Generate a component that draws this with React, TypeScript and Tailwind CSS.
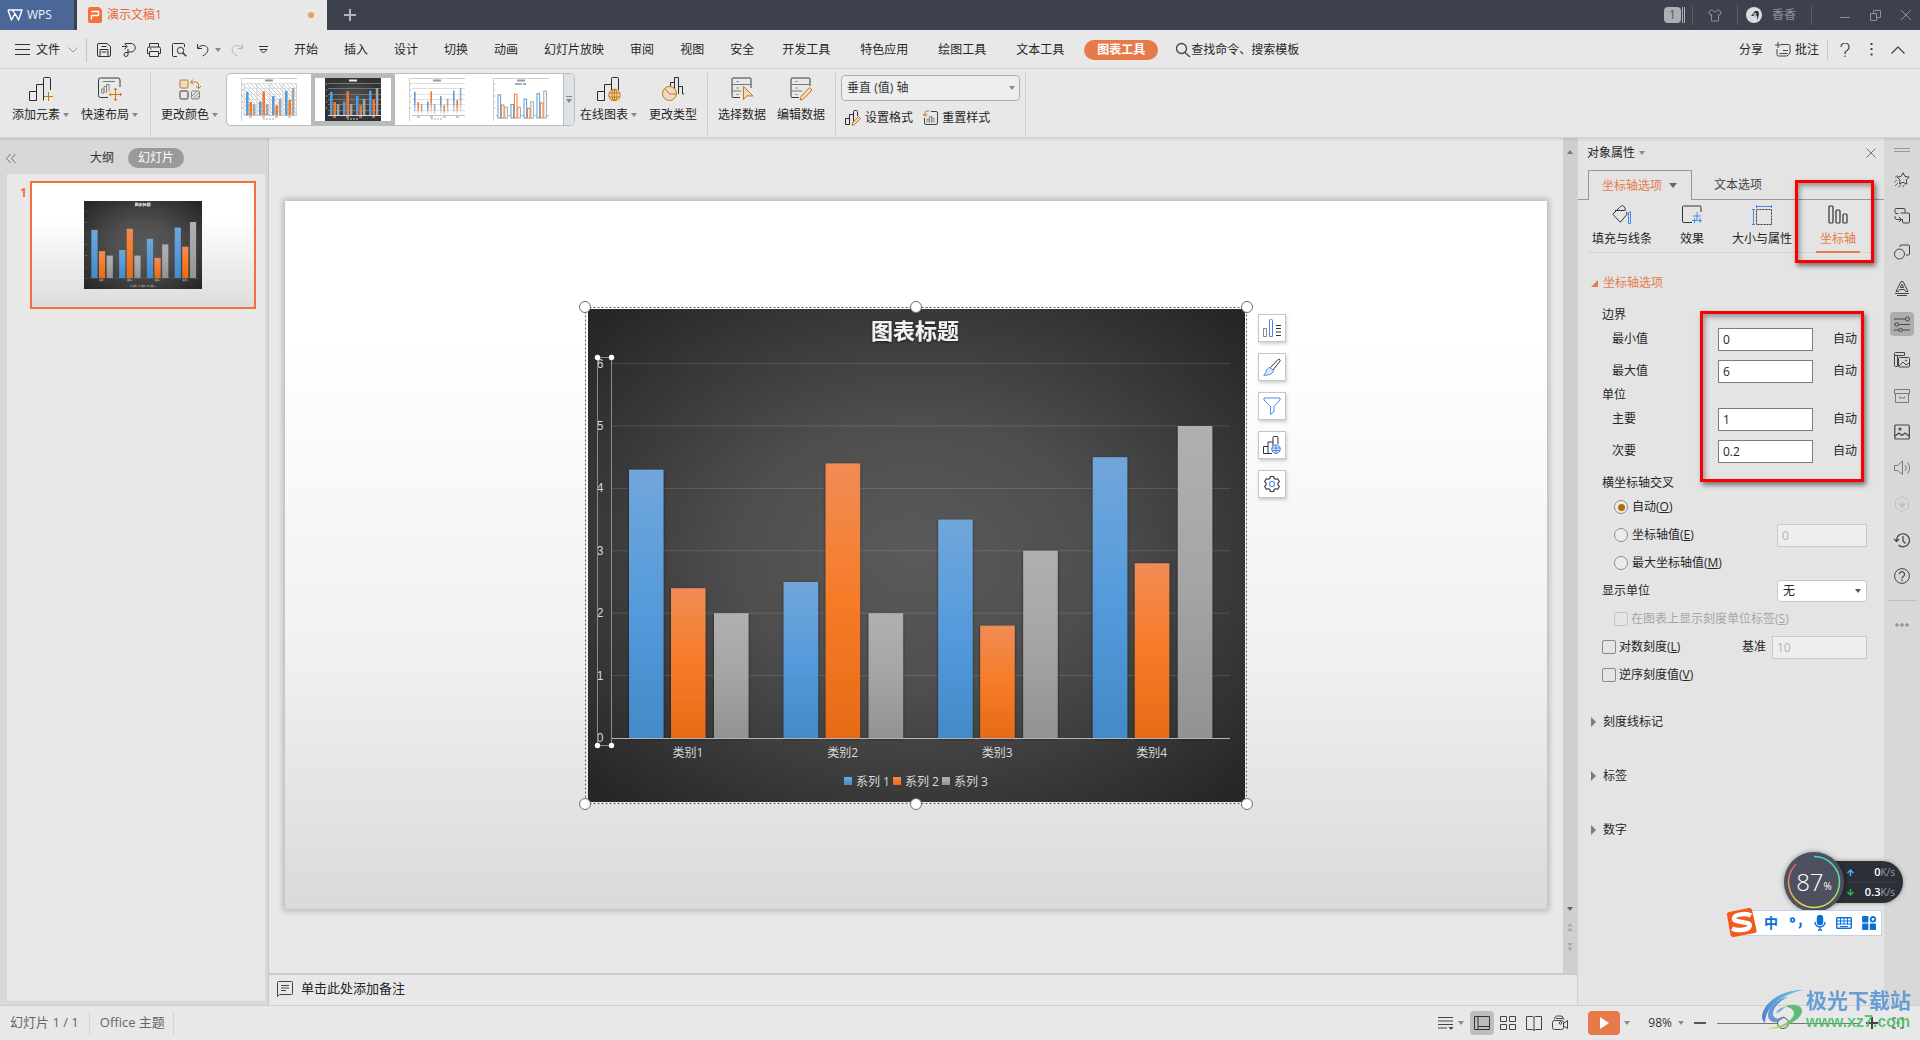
import React, { useState } from 'react';

type Children = { children?: React.ReactNode };

const INK = '#333333';
const AMBER = '#c8780a';
const BLUE = '#4a86e8';

interface IconProps extends Children {
  w?: number;
  h?: number;
  className?: string;
  stroke?: string;
  sw?: number;
}

const Icon: React.FC<IconProps> = ({ w = 16, h, className = '', stroke = INK, sw = 1, children }) => (
  <svg
    width={w}
    height={h ?? w}
    viewBox={`0 0 ${w} ${h ?? w}`}
    fill="none"
    stroke={stroke}
    strokeWidth={sw}
    strokeLinejoin="round"
    aria-hidden="true"
    className={`block shrink-0 ${className}`}
  >
    {children}
  </svg>
);

const Caret = ({ className = 'text-[#8a8a8a]' }: { className?: string }) => (
  <svg width="6" height="4" viewBox="0 0 6 4" fill="currentColor" aria-hidden="true" className={`block shrink-0 ${className}`}>
    <path d="M0 0h6L3 4z" />
  </svg>
);

/* ---------- chart ---------- */

const categories = [
  { name: '类别1', values: [4.3, 2.4, 2] },
  { name: '类别2', values: [2.5, 4.4, 2] },
  { name: '类别3', values: [3.5, 1.8, 3] },
  { name: '类别4', values: [4.5, 2.8, 5] },
];

const seriesStops = [
  ['#71a6db', '#559bdb', '#438ac9'],
  ['#f18c55', '#f67b28', '#e56b17'],
  ['#b0b0b0', '#a5a5a5', '#929292'],
];

const BASE_Y = 429;
const UNIT = 62.4;
const barOffsets = [41, 83, 126];

const Chart = ({ id, className = '' }: { id: string; className?: string }) => (
  <svg viewBox="0 0 657 493" className={`block ${className}`} role="img" aria-label="图表标题">
    <defs>
      <radialGradient id={`${id}-bg`} cx="0.5" cy="0.5" r="0.68">
        <stop offset="0" stopColor="#5a5a5a" />
        <stop offset="0.4" stopColor="#4e4e4e" />
        <stop offset="1" stopColor="#262626" />
      </radialGradient>
      {seriesStops.map((stops, i) => (
        <linearGradient key={i} id={`${id}-s${i}`} x1="0" y1="0" x2="0" y2="1">
          <stop offset="0" stopColor={stops[0]} />
          <stop offset="0.5" stopColor={stops[1]} />
          <stop offset="1" stopColor={stops[2]} />
        </linearGradient>
      ))}
      <filter id={`${id}-sh`} x="-20%" y="-5%" width="140%" height="110%">
        <feDropShadow dx="0" dy="1" stdDeviation="1.5" floodColor="#000" floodOpacity="0.55" />
      </filter>
    </defs>
    <rect width="657" height="493" fill={`url(#${id}-bg)`} />
    <text x="327" y="30" textAnchor="middle" fontSize="22" fontWeight="700" fill="#f2f2f2" filter={`url(#${id}-sh)`}>
      图表标题
    </text>
    {[1, 2, 3, 4, 5, 6].map((n) => (
      <line key={n} x1="24" x2="642" y1={BASE_Y - n * UNIT} y2={BASE_Y - n * UNIT} stroke="#fff" strokeOpacity="0.14" />
    ))}
    {[0, 1, 2, 3, 4, 5, 6].map((n) => (
      <text key={n} x="12" y={BASE_Y - n * UNIT + 4} textAnchor="middle" fontSize="12" fill="#d9d9d9" className="font-['Liberation_Sans',sans-serif]">
        {n}
      </text>
    ))}
    {categories.map((c, g) => (
      <g key={c.name}>
        {c.values.map((v, s) => (
          <rect
            key={s}
            x={barOffsets[s] + g * 154.6}
            y={BASE_Y - v * UNIT}
            width="34.5"
            height={v * UNIT}
            fill={`url(#${id}-s${s})`}
            filter={`url(#${id}-sh)`}
          />
        ))}
        <text x={100 + g * 154.6} y="448" textAnchor="middle" fontSize="12" fill="#d9d9d9">
          {c.name}
        </text>
      </g>
    ))}
    <line x1="24" x2="642" y1={BASE_Y + 0.5} y2={BASE_Y + 0.5} stroke="#b4b4b4" />
    {['系列 1', '系列 2', '系列 3'].map((label, i) => (
      <g key={label}>
        <rect x={256 + i * 49} y="468" width="8" height="8" fill={`url(#${id}-s${i})`} />
        <text x={268 + i * 49} y="477" fontSize="12" fill="#d9d9d9">
          {label}
        </text>
      </g>
    ))}
  </svg>
);

const ChartSelection = () => (
  <svg viewBox="0 0 657 493" className="pointer-events-none absolute inset-0 h-full w-full overflow-visible" aria-hidden="true">
    <rect x="-2.5" y="-1.5" width="661" height="496" fill="none" stroke="#fff" />
    <rect x="-2.5" y="-1.5" width="661" height="496" fill="none" stroke="#555" strokeDasharray="2 2" />
    {[-3, 328, 659].map((x) =>
      [-2, 495].map((y) => <circle key={`${x}${y}`} cx={x} cy={y} r="5.5" fill="#fff" stroke="#6f6f6f" />)
    )}
    <rect x="9.5" y="48.5" width="14" height="388" fill="none" stroke="#8b8b90" />
    {[9.5, 23.5].map((x) =>
      [48.5, 436.5].map((y) => <circle key={`${x}${y}`} cx={x} cy={y} r="2.7" fill="#fff" />)
    )}
  </svg>
);

type MiniStyle = 'hatch' | 'dark' | 'fade' | 'outline';

const MiniChart = ({ kind }: { kind: MiniStyle }) => {
  const dark = kind === 'dark';
  const colors = ['#5b9bd5', '#f07a2e', '#a5a5a5'];
  return (
    <svg width="56" height="43" viewBox="0 0 56 43" className="block" aria-hidden="true">
      <defs>
        <radialGradient id="mini-dark">
          <stop offset="0" stopColor="#5a5a5a" />
          <stop offset="1" stopColor="#333" />
        </radialGradient>
        <pattern id="mini-hatch" width="4" height="4" patternUnits="userSpaceOnUse">
          <path d="M0 0l4 4" stroke="#bbb" strokeWidth="0.8" />
        </pattern>
        {colors.map((c, i) => (
          <linearGradient key={c} id={`mini-f${i}`} x1="0" y1="0" x2="0" y2="1">
            <stop offset="0.4" stopColor={c} />
            <stop offset="1" stopColor={c} stopOpacity="0" />
          </linearGradient>
        ))}
      </defs>
      <rect width="56" height="43" fill={dark ? 'url(#mini-dark)' : '#fff'} />
      {!dark && <path d="M0.5 43V0.5H56" fill="none" stroke="#d0d0d0" />}
      <path d="M24 2.5h8" stroke={dark ? '#eee' : '#999'} strokeWidth="2" />
      {kind === 'outline' && <path d="M22 6h4M30 6h3" stroke="#5b9bd5" strokeWidth="1.5" />}
      {kind === 'outline' && <path d="M26 6h3" stroke="#f07a2e" strokeWidth="1.5" />}
      {kind === 'hatch' && <rect x="3" y="6" width="53" height="31" fill="url(#mini-hatch)" />}
      {kind === 'hatch' && <path d="M3 6v31M16 6v31M29 6v31M42 6v31M55.5 6v31" stroke="#d0d0d0" />}
      {kind !== 'outline' &&
        [5.5, 10.5, 16.5, 21.5, 26.5, 32.5].map((y) => (
          <path key={y} d={`M3 ${y}h53`} stroke={dark ? '#757575' : '#dedede'} />
        ))}
      <path d="M3 37.5h53" stroke={dark ? '#ddd' : '#c0c0c0'} />
      {[6, 12, 18, 24, 30].map((y) => (
        <path key={y} d={`M1 ${y}h1`} stroke={dark ? '#ccc' : '#999'} />
      ))}
      {categories.map((c, g) =>
        c.values.map((v, s) => {
          const x = 5 + g * 13 + s * 3.4;
          const h = v * 5.4;
          if (kind === 'outline') {
            return <rect key={`${g}${s}`} x={x} y={40 - h} width="2.6" height={h} fill="#fff" stroke={colors[s]} strokeWidth="1" />;
          }
          return (
            <rect
              key={`${g}${s}`}
              x={x}
              y={37 - h}
              width={kind === 'fade' ? 1.6 : 2.6}
              height={h}
              fill={kind === 'fade' ? `url(#mini-f${s})` : colors[s]}
            />
          );
        })
      )}
      {kind !== 'outline' && [8, 21, 34, 47].map((x) => <path key={x} d={`M${x} 39h3`} stroke={dark ? '#ccc' : '#999'} />)}
      {kind !== 'outline' && <path d="M22 41h12" stroke={dark ? '#bbb' : '#aaa'} strokeDasharray="2 1" />}
    </svg>
  );
};

/* ---------- top bars ---------- */

const TitleBar = () => (
  <header className="flex h-[30px] items-stretch bg-[#3d404d] text-xs">
    <a href="#home" className="flex w-[74px] items-center gap-1 bg-[#4a6797] pl-[7px] text-[#f0f3f8]">
      <Icon w={16} h={12} stroke="#fff" sw={1.4}>
        <path d="M1 1h14L11.5 11 8 4.5 4.5 11 1 1M5.5 1l6 9.5" />
      </Icon>
      WPS
    </a>
    <div className="ml-[3px] flex w-[250px] items-center bg-[#e8e8e8] pl-[11px] text-[#e8683a]">
      <Icon w={14} h={16} stroke="none">
        <path d="M2 0h9l3 3v11a2 2 0 0 1-2 2H2a2 2 0 0 1-2-2V2a2 2 0 0 1 2-2z" fill="#f56f3c" />
        <path d="M3.5 4.5h7v4h-7M3.5 8v4.5" stroke="#fff" strokeWidth="1.4" />
      </Icon>
      <span className="ml-[5px]">演示文稿1</span>
      <span className="mr-[13px] ml-auto h-1.5 w-1.5 rounded-full bg-[#e8a05c]" />
    </div>
    <button aria-label="新建" className="ml-[17px]">
      <Icon w={12} stroke="#b4b6bc" sw={2}>
        <path d="M6 0v12M0 6h12" />
      </Icon>
    </button>
    <div className="ml-auto flex items-center pr-[9px] text-[#8e919b]">
      <span className="h-4 w-[17px] rounded-sm bg-[#adafb5] text-center leading-4 text-[#55575f]">1</span>
      <Icon w={5} h={16} stroke="#adafb5">
        <path d="M1.5 0v16M3.5 0v16" />
      </Icon>
      <span className="ml-1.5 h-5 w-px bg-[#5b5e6a]" />
      <button aria-label="皮肤" className="mx-[15px]">
        <Icon w={14} stroke="#8e919b">
          <path d="M4 1.5L0.8 4l1.2 3 1.5-.5V13h7V6.500l1.5.5 1.200-3L10 1.500C9.500 3 8.500 3.700 7 3.700S4.500 3 4 1.500z" />
        </Icon>
      </button>
      <span className="h-5 w-px bg-[#5b5e6a]" />
      <Icon w={16} stroke="none" className="ml-2">
        <circle cx="8" cy="8" r="8" fill="#d3dfe4" />
        <path d="M5 9l4-5 3 0 1 3-1.500 6.500L11 9z" fill="#2d2d3a" />
        <path d="M7 7l3-1.500.5 3.500-1.500 2z" fill="#d9a79c" />
      </Icon>
      <span className="ml-2.5">香香</span>
      <span className="ml-[15px] h-5 w-px bg-[#5b5e6a]" />
      <div className="ml-7 flex gap-5">
        <button aria-label="最小化">
          <Icon w={10} stroke="#8e919b"><path d="M0 7.500h10" /></Icon>
        </button>
        <button aria-label="还原">
          <Icon w={11} stroke="#8e919b"><path d="M.5 3.500h6v7h-6zM3.500 3.500v-3h7v7h-4" /></Icon>
        </button>
        <button aria-label="关闭">
          <Icon w={10} stroke="#8e919b"><path d="M0 0l10 10M10 0L0 10" /></Icon>
        </button>
      </div>
    </div>
  </header>
);

const SaveIcon = () => (
  <Icon>
    <path d="M2 1.500h9l3.500 3V13a1.500 1.500 0 0 1-1.500 1.500H3A1.500 1.500 0 0 1 1.500 13V2zM4 14V7.500h8V14M5.500 10h5M5.500 4.500h5" />
  </Icon>
);
const ExportIcon = () => (
  <Icon>
    <path d="M1 4.500h4M4 1.500h6a4 4 0 0 1 0 8.500H6.500M3.500 2l3 2.500-3 2.500M7 7v5.500a2 2 0 1 1-2-2H7" />
  </Icon>
);
const PrintIcon = () => (
  <Icon>
    <path d="M3.500 5V1.500h9V5M3.500 11.500h-2V6.500a1.500 1.500 0 0 1 1.500-1.500h10a1.500 1.500 0 0 1 1.500 1.500v5h-2M3.500 9.500h9v5h-9zM4 7h1.500" />
  </Icon>
);
const PreviewIcon = () => (
  <Icon>
    <path d="M6 14.500H2.500a1 1 0 0 1-1-1v-11a1 1 0 0 1 1-1h10a1 1 0 0 1 1 1V5" />
    <circle cx="9.500" cy="8.500" r="3.200" />
    <path d="M11.800 10.800l3.400 3.500" strokeWidth="1.500" />
  </Icon>
);

const shortTabs = ['开始', '插入', '设计', '切换', '动画', '幻灯片放映', '审阅', '视图', '安全'];
const wideTabs = ['开发工具', '特色应用', '绘图工具', '文本工具'];

const MenuBar = () => (
  <nav className="flex h-[39px] items-center border-b border-[#d6d6d6] bg-[#e8e8e8] pt-px pl-[15px] text-xs whitespace-nowrap text-[#262626]">
    <button className="flex items-center">
      <Icon w={15} h={11}><path d="M0 .5h15M0 5.500h15M0 10.500h15" /></Icon>
      <span className="ml-1.5">文件</span>
      <Icon w={10} h={6} stroke="#999" className="ml-2"><path d="M.5 .5L5 5 9.500 .5" /></Icon>
    </button>
    <span className="ml-2 h-6 w-px bg-[#c4c4c4]" />
    <div className="ml-[9px] flex items-center gap-[9px]">
      <button aria-label="保存"><SaveIcon /></button>
      <button aria-label="输出"><ExportIcon /></button>
      <button aria-label="打印"><PrintIcon /></button>
      <button aria-label="打印预览"><PreviewIcon /></button>
      <button aria-label="撤销" className="flex items-center gap-[5px]">
        <Icon w={14} h={14}>
          <path d="M1.500 1v4.500H6M1.800 5.300C4 2.500 8 1.500 10.500 3.700s2 6.300-4 9.300" />
        </Icon>
        <Caret />
      </button>
      <button aria-label="恢复">
        <Icon w={14} h={14} stroke="#b8b8b8">
          <path d="M12.500 1v4.500H8M12.200 5.300C10 2.500 6 1.500 3.500 3.700s-2 6.300 4 9.300" />
        </Icon>
      </button>
      <button aria-label="自定义快速访问工具栏" className="ml-1.5">
        <Icon w={9} h={8}><path d="M0 .5h9M1 3.500h7L4.500 7z" /></Icon>
      </button>
    </div>
    <div className="ml-[26px] flex gap-[26px]">
      {shortTabs.map((t) => <button key={t}>{t}</button>)}
    </div>
    <div className="ml-[28px] flex gap-[30px]">
      {wideTabs.map((t) => <button key={t}>{t}</button>)}
    </div>
    <button className="ml-5 h-5 rounded-full bg-[#e67a4b] px-[13px] font-bold text-white">图表工具</button>
    <button className="ml-[17px] flex items-center">
      <Icon w={16} stroke="#444" sw={1.300}>
        <circle cx="6.500" cy="6.500" r="5" /><path d="M10 10.500l5 4.500" />
      </Icon>
      查找命令、搜索模板
    </button>
    <div className="mr-[15px] ml-auto flex items-center">
      <button>分享</button>
      <button className="ml-3 flex items-center gap-1">
        <Icon w={16} stroke="#444">
          <path d="M6 2.500h7.500a1.500 1.500 0 0 1 1.500 1.500v7l-3 3H3.500A1.500 1.500 0 0 1 2 12.500V7M3 0v6M0 3h6M4.500 11.500h8M8 8.500h5" />
        </Icon>
        批注
      </button>
      <span className="ml-2 h-5 w-px bg-[#c8c8c8]" />
      <button aria-label="帮助" className="ml-3">
        <Icon w={10} h={14} stroke="#444" sw={1.200}>
          <path d="M1 4a4 4 0 1 1 6.500 3C5.500 8.300 5 9 5 11M5 12.500v1.500" />
        </Icon>
      </button>
      <button aria-label="更多" className="ml-5">
        <Icon w={3} h={13} stroke="none"><path d="M.5 0h2v2h-2zM.5 5h2v2h-2zM.5 10.500h2v2h-2z" fill="#444" /></Icon>
      </button>
      <button aria-label="收起功能区" className="ml-[18px]">
        <Icon w={14} h={8} stroke="#444" sw={1.200}><path d="M.5 7.500L7 1l6.500 6.500" /></Icon>
      </button>
    </div>
  </nav>
);

/* bars rising to the right, shared by several ribbon icons */
const Steps = () => <path d="M.5 14.500h7v9h-7zM7.500 23.500V7.500h7v16M14.500 18V1.500a1 1 0 0 1 1-1h5a1 1 0 0 1 1 1V13" />;

const RibbonButton = ({ label, caret, children }: { label: string; caret?: boolean } & Children) => (
  <button className="flex flex-col items-center">
    <span className="flex h-6 items-center">{children}</span>
    <span className="mt-1.5 flex items-center leading-4">
      {label}
      {caret && <span className="ml-[3px]"><Caret /></span>}
    </span>
  </button>
);

const Divider = () => <span className="block h-[62px] w-px bg-[#cfcfcf]" />;

const gallery: MiniStyle[] = ['hatch', 'dark', 'fade', 'outline'];

const Ribbon = () => {
  const [style, setStyle] = useState<MiniStyle>('dark');
  return (
    <div className="relative z-10 flex h-[69px] items-start border-b border-[#d2d2d2] bg-[#e8e8e8] pt-1 pl-3 text-xs whitespace-nowrap text-[#262626] shadow-[0_1px_3px_rgba(0,0,0,0.12)]">
      <div className="flex gap-3 pt-1">
        <RibbonButton label="添加元素" caret>
          <Icon w={24} stroke="#2b2b2b">
            <Steps />
            <path d="M19.500 15v9M15 19.500h9" stroke={AMBER} />
          </Icon>
        </RibbonButton>
        <RibbonButton label="快速布局" caret>
          <Icon w={24} stroke="#3a3a3a">
            <path d="M10 20.500H2.500a2 2 0 0 1-2-2V3a2 2 0 0 1 2-2H20a2 2 0 0 1 2 2v7" />
            <path d="M5 4.500h12" stroke="#777" />
            <path d="M3.500 16v-4h2.500v4zM6 16V9.500h2.500V16M8.500 16V7.500H11v7" stroke="#888" />
            <path d="M17.500 11.500v12M11.500 17.500h12M15.800 13l1.700-1.800 1.700 1.800M15.800 22l1.700 1.700 1.700-1.700M13 15.800l-1.700 1.700 1.700 1.700M22 15.800l1.700 1.700-1.700 1.700" stroke={AMBER} />
          </Icon>
        </RibbonButton>
      </div>
      <span className="ml-3"><Divider /></span>
      <div className="ml-2.5 pt-1">
        <RibbonButton label="更改颜色" caret>
          <Icon w={22} stroke="#3a3a3a">
            <rect x="1" y="2" width="8" height="8" rx="1.200" stroke={AMBER} fill="#ecdcc4" />
            <path d="M12 4h4.500a3 3 0 0 1 3 3v3.500M14 1.500L11.500 4 14 6.500M17 8l2.500 2.700L22 8" stroke={AMBER} />
            <rect x="1" y="13" width="8" height="8" rx="1.200" />
            <rect x="12.500" y="13" width="8" height="8" rx="1.200" stroke="#888" />
            <path d="M13 18l5-5M13.500 21l7-7M17 21l3.500-3.500" stroke="#888" />
          </Icon>
        </RibbonButton>
      </div>
      <div className="ml-2 flex h-[53px] overflow-hidden rounded-[5px] border border-[#b9bcc0] bg-white">
        {gallery.map((k) => (
          <button
            key={k}
            aria-label={k}
            aria-pressed={style === k}
            onClick={() => setStyle(k)}
            className={`flex w-[84px] items-center justify-center border-4 ${style === k ? 'border-[#bababa]' : 'border-transparent'}`}
          >
            <MiniChart kind={k} />
          </button>
        ))}
        <button aria-label="更多样式" className="flex w-[11px] flex-col items-center justify-center gap-0.5 border-l border-[#b9bcc0] bg-[#dfe2e5]">
          <span className="h-px w-1.5 bg-[#888]" />
          <Caret />
        </button>
      </div>
      <div className="ml-[5px] flex gap-3 pt-1">
        <RibbonButton label="在线图表" caret>
          <Icon w={24} stroke="#2b2b2b">
            <Steps />
            <circle cx="17.500" cy="18" r="5.700" fill="#ecdcc4" stroke={AMBER} />
            <ellipse cx="17.500" cy="18" rx="2.500" ry="5.700" stroke={AMBER} />
            <path d="M12 16h11M12 20h11M17.500 12v12" stroke={AMBER} />
          </Icon>
        </RibbonButton>
        <RibbonButton label="更改类型">
          <Icon w={24} stroke="#2b2b2b">
            <path d="M9.500 9V5.500h4V17M13.500 17V.5h4V17M17.500 9.500h4V17h1.500" />
            <circle cx="8.500" cy="16.500" r="7" fill="#e8dcc8" stroke={AMBER} />
            <path d="M4 11.500l4.500 5.500h7" stroke={AMBER} />
          </Icon>
        </RibbonButton>
      </div>
      <span className="ml-2.5"><Divider /></span>
      <div className="ml-2.5 flex gap-[11px] pt-1">
        <RibbonButton label="选择数据">
          <Icon w={24} stroke="#3a3a3a">
            <path d="M10 20.500H3a1 1 0 0 1-1-1V2a1 1 0 0 1 1-1h17a1 1 0 0 1 1 1v9" />
            <path d="M2 7.500h19M2 14h9M6.500 4.500h2M6.500 11h2M6.500 17.500h2" stroke="#777" />
            <path d="M13.500 9.500v13l3.500-3.700 6 .2z" stroke={AMBER} fill="#ecdcc4" />
          </Icon>
        </RibbonButton>
        <RibbonButton label="编辑数据">
          <Icon w={24} stroke="#3a3a3a">
            <path d="M10 20.500H3a1 1 0 0 1-1-1V2a1 1 0 0 1 1-1h17a1 1 0 0 1 1 1v7" />
            <path d="M2 7.500h19M2 14h11M6.500 4.500h2M6.500 11h2M6.500 17.500h2" stroke="#777" />
            <path d="M20.500 10.500l2.500 2.500-8.500 9-3.300 1.200.8-3.700z" stroke={AMBER} fill="#ecdcc4" />
          </Icon>
        </RibbonButton>
      </div>
      <span className="ml-2.5"><Divider /></span>
      <div className="ml-[5px] flex flex-col pt-0.5">
        <span className="relative flex items-center">
          <select aria-label="图表元素" className="h-[26px] w-[179px] appearance-none rounded border border-[#adadad] bg-[#eeeeee] pl-[5px] text-xs text-[#333]">
            <option>垂直 (值) 轴</option>
          </select>
          <span className="pointer-events-none absolute right-[5px]"><Caret /></span>
        </span>
        <div className="mt-[9px] flex items-center gap-2.5 pl-1">
          <button className="flex items-center gap-1">
            <Icon w={16} stroke="#2b2b2b">
              <path d="M.5 14.500v-6h4v6zM4.500 14.500V4.500h4v10M8.500 8V1.500a1 1 0 0 1 1-1h2a1 1 0 0 1 1 1V6" />
              <path d="M13.500 6.500l2 2-6 6-2.300.9.500-2.600z" stroke={AMBER} fill="#ecdcc4" />
            </Icon>
            设置格式
          </button>
          <button className="flex items-center gap-1">
            <Icon w={15} h={16} stroke="#444">
              <path d="M8 1.500h5a1.500 1.500 0 0 1 1.500 1.500v10a1.500 1.500 0 0 1-1.500 1.500H3A1.500 1.500 0 0 1 1.500 13V8" />
              <path d="M4 12.500V9h2v3.500M6.500 12.500V6.500h2v6M9 12.500V8h2v4.500" stroke="#888" />
              <path d="M6.500 1H4a2 2 0 0 0-2 2v3M0 4l2 2.300L4.200 4" stroke={AMBER} />
            </Icon>
            重置样式
          </button>
        </div>
      </div>
      <span className="ml-[5px]"><Divider /></span>
    </div>
  );
};

/* ---------- left panel ---------- */

const SlidePanel = () => (
  <aside className="flex w-[269px] shrink-0 flex-col border-r border-[#c4c4c4] bg-[#d8d8d8] text-xs">
    <div className="flex h-9 items-center pt-1 pl-1.5">
      <button aria-label="折叠面板">
        <Icon w={10} h={9} stroke="#777"><path d="M4.500 0L.5 4.500l4 4.500M9.500 0l-4 4.500 4 4.500" /></Icon>
      </button>
      <button className="ml-[74px] text-[#333]">大纲</button>
      <button className="ml-3.5 h-5 rounded-full bg-[#9a9a9a] px-2.5 text-white">幻灯片</button>
    </div>
    <div className="mr-[3px] mb-1 ml-[7px] flex flex-1 items-start bg-[#e8e8e8] pt-[7px] pl-[13px]">
      <span className="mt-1 w-2.5 leading-4 font-bold text-[#f2703c]">1</span>
      <button aria-label="幻灯片 1" className="flex h-32 w-[226px] items-center justify-center border-2 border-[#f2703c] bg-linear-to-b from-white from-30% to-[#dcdcdc]">
        <Chart id="thumb" className="w-[118px]" />
      </button>
    </div>
  </aside>
);

/* ---------- canvas ---------- */

const sideTools: { label: string; icon: React.ReactNode }[] = [
  {
    label: '图表元素',
    icon: (
      <Icon w={18} stroke={BLUE}>
        <path d="M.5 17.500v-8h3v8z" stroke="#888" />
        <path d="M6.500 17.500V1.500a1 1 0 0 1 1-1h1a1 1 0 0 1 1 1v16z" />
        <path d="M13 6.500h5M13 9.500h5M13 13h5M13 16.500h5" stroke={INK} />
      </Icon>
    ),
  },
  {
    label: '图表样式',
    icon: (
      <Icon w={18} stroke={INK}>
        <path d="M7.500 9.500L15 1.500c1-1 2.800.2 2 1.600L10 12" />
        <path d="M7 9.500l3.200 2.800c.3 2.700-3 5-9.500 5C3 16 3 10 7 9.500z" stroke={BLUE} fill="#dbe7fa" />
      </Icon>
    ),
  },
  {
    label: '图表筛选器',
    icon: (
      <Icon w={18} stroke={BLUE}>
        <path d="M1 1h16v2l-6 6.500v5l-3.500 3V9.500L1 3z" />
      </Icon>
    ),
  },
  {
    label: '在线图表',
    icon: (
      <Icon w={18} stroke={INK}>
        <path d="M.5 17.500v-7h4.500v7zM5 10.500V6h5M5 17.500h4M10 10V1.500a1 1 0 0 1 1-1h3a1 1 0 0 1 1 1V8" />
        <circle cx="13" cy="13.200" r="4.300" stroke={BLUE} fill="#dbe7fa" />
        <path d="M9 12h8M9 14.500h8M13 9v8.500" stroke={BLUE} />
      </Icon>
    ),
  },
  {
    label: '设置图表区域格式',
    icon: (
      <Icon w={18} stroke={INK} sw={1.100}>
        <path d="M7.300 1.500h3.400l.5 2 1.500.8 2-.6 1.700 3-1.500 1.400v1.800l1.500 1.400-1.700 3-2-.6-1.500.8-.5 2H7.300l-.5-2-1.500-.8-2 .6-1.700-3 1.500-1.400V8.100L1.600 6.700l1.700-3 2 .6 1.500-.8z" />
        <circle cx="9" cy="9" r="2.500" stroke={BLUE} />
      </Icon>
    ),
  },
];

const Canvas = () => (
  <main className="flex min-w-0 flex-1 flex-col">
    <div className="flex flex-1">
      <div className="flex flex-1 bg-[#e8e8e8] px-4 pt-[63px] pb-16">
        <div className="flex flex-1 items-center justify-center bg-linear-to-b from-white from-20% via-[#f0f0f0] via-65% to-[#dadada] shadow-[0_0_6px_2px_rgba(0,0,0,0.22)]">
          <div className="relative w-[657px]">
            <Chart id="main" />
            <ChartSelection />
            <div className="absolute top-[5px] left-full ml-[13px] flex flex-col gap-[11px]">
              {sideTools.map((t) => (
                <button
                  key={t.label}
                  aria-label={t.label}
                  className="flex h-7 w-7 items-center justify-center border border-[#c6c6c6] bg-white shadow-[1px_2px_3px_rgba(0,0,0,0.18)]"
                >
                  {t.icon}
                </button>
              ))}
            </div>
          </div>
        </div>
      </div>
      <div className="flex w-3.5 flex-col items-center bg-[#cfcfcf] pt-3 pb-[22px]">
        <Caret className="rotate-180 text-[#777]" />
        <span className="mt-auto"><Caret className="text-[#666]" /></span>
        <Icon w={6} h={8} stroke="none" className="mt-3"><path d="M3 0l3 3.500H0zM3 4.500L6 8H0z" fill="#aaa" /></Icon>
        <Icon w={6} h={8} stroke="none" className="mt-3"><path d="M0 0h6L3 3.500zM0 4.500h6L3 8z" fill="#aaa" /></Icon>
      </div>
    </div>
    <div className="flex h-8 items-center gap-2 border-t-2 border-[#cbcbcb] bg-[#e8e8e8] pb-0.5 pl-2 text-[13px] text-[#262626]">
      <Icon w={16} stroke="#444">
        <path d="M.5 15.500V1.500a1 1 0 0 1 1-1h13a1 1 0 0 1 1 1v11a1 1 0 0 1-1 1h-12zM4 4.500h8M4 7h8M4 9.500h5" />
      </Icon>
      单击此处添加备注
    </div>
  </main>
);

/* ---------- property panel ---------- */

const propTabs: { label: string; icon: React.ReactNode; className: string; active?: boolean }[] = [
  {
    label: '填充与线条',
    className: '',
    icon: (
      <Icon w={20}>
        <path d="M8.500 1.500L.8 9.200l7.500 8 6.500-7.500V7M8.500 1.500c2-2 4.500 0 5 4M3 5.500h10" />
        <path d="M16.500 18.500V7.500l2-1v12z" stroke={BLUE} />
      </Icon>
    ),
  },
  {
    label: '效果',
    className: 'w-8',
    icon: (
      <Icon w={20}>
        <path d="M10 17.500H1.500a1 1 0 0 1-1-1V2a1 1 0 0 1 1-1H18a1 1 0 0 1 1 1v5" />
        <path d="M15 7v8M11 11h8M12.500 13v5M10 15.500h5M18 13v5M15.500 15.500h5" stroke={BLUE} />
      </Icon>
    ),
  },
  {
    label: '大小与属性',
    className: '',
    icon: (
      <Icon w={20}>
        <rect x="4.500" y="4.500" width="15" height="15" strokeDasharray="2 1" />
        <path d="M4 1.500h16M4.500 0v3M19.500 0v3M1.500 4v16M0 4.500h3M0 19.500h3" stroke={BLUE} />
      </Icon>
    ),
  },
  {
    label: '坐标轴',
    className: 'w-11 text-[#e67a4b] border-b-2 border-[#e67a4b]',
    active: true,
    icon: (
      <Icon w={20} sw={1.200}>
        <rect x="1" y="1" width="4" height="17" rx="1" />
        <rect x="8" y="5" width="4" height="13" rx="1" />
        <rect x="15" y="9" width="4" height="9" rx="1" />
      </Icon>
    ),
  },
];

const ValueRow = ({ id, label, initial }: { id: string; label: string; initial: string }) => (
  <div className="flex h-8 items-center pl-2.5">
    <label htmlFor={id} className="flex-1">{label}</label>
    <input id={id} defaultValue={initial} className="h-[23px] w-[95px] border border-[#7c7c7c] bg-white pl-1 text-xs" />
    <button className="mr-[17px] ml-5">自动</button>
  </div>
);

const Radio = ({ label, hotkey, checked, onChange }: { label: string; hotkey: string; checked: boolean; onChange: () => void }) => (
  <label className="flex items-center gap-1">
    <span className="relative flex h-3.5 w-3.5 items-center justify-center">
      <input type="radio" name="cross" checked={checked} onChange={onChange} className="h-3.5 w-3.5 appearance-none rounded-full border border-[#8c8c8c] bg-[#ececec]" />
      {checked && <span className="absolute h-[7px] w-[7px] rounded-full bg-[#b66a00]" />}
    </span>
    <span>{label}(<u>{hotkey}</u>)</span>
  </label>
);

const Check = ({ label, hotkey, disabled }: { label: string; hotkey: string; disabled?: boolean }) => (
  <label className={`flex items-center gap-[3px] ${disabled ? 'text-[#a6a6a6]' : ''}`}>
    <input
      type="checkbox"
      disabled={disabled}
      className="h-3.5 w-3.5 appearance-none rounded-[2px] border border-[#8a8a8a] checked:bg-[#b66a00] disabled:border-[#c4c4c4]"
    />
    <span>{label}(<u>{hotkey}</u>)</span>
  </label>
);

const PropertyPanel = () => {
  const [cross, setCross] = useState('O');
  return (
    <aside className="relative w-[307px] shrink-0 border-l border-[#d0d0d0] bg-[#e4e4e4] text-xs whitespace-nowrap text-[#262626]">
      <div className="flex h-[30px] items-center pr-2 pl-[9px]">
        <button className="flex items-center gap-1">对象属性 <Caret /></button>
        <button aria-label="关闭面板" className="ml-auto">
          <Icon w={10} stroke="#777"><path d="M.5 .5l9 9M9.500 .5l-9 9" /></Icon>
        </button>
      </div>
      <div className="mt-0.5 flex h-[30px]">
        <span className="w-2.5 border-b border-[#999]" />
        <button className="flex w-[104px] items-center border border-b-0 border-[#999] pl-[13px] text-[#e67a4b]">
          坐标轴选项
          <span className="ml-[7px]">
            <svg width="8" height="5" viewBox="0 0 8 5" aria-hidden="true"><path d="M0 0h8L4 5z" fill="#666" /></svg>
          </span>
        </button>
        <button className="flex-1 border-b border-[#999] pl-[22px] text-left text-[#444]">文本选项</button>
      </div>
      <div className="mr-[11px] ml-2.5 flex h-[53px] items-stretch gap-6 border-b border-[#d2d2d2] pl-1">
        {propTabs.map((t) => (
          <button key={t.label} aria-pressed={!!t.active} className={`-mb-px flex flex-col items-center pt-[5px] ${t.className}`}>
            {t.icon}
            <span className="mt-1.5 leading-4">{t.label}</span>
          </button>
        ))}
      </div>
      <button className="mt-1.5 flex h-12 w-full items-center gap-[5px] pl-[13px] text-[#e67a4b]">
        <svg width="7" height="7" viewBox="0 0 7 7" aria-hidden="true"><path d="M7 0v7H0z" fill="#e67a4b" /></svg>
        坐标轴选项
      </button>
      <div className="pr-[17px] pl-6">
        <h3 className="h-4 leading-4">边界</h3>
        <div className="-mr-[7px]">
          <ValueRow id="min" label="最小值" initial="0" />
          <ValueRow id="max" label="最大值" initial="6" />
        </div>
        <h3 className="h-4 leading-4">单位</h3>
        <div className="-mr-[7px]">
          <ValueRow id="major" label="主要" initial="1" />
          <ValueRow id="minor" label="次要" initial="0.2" />
        </div>
        <h3 className="mt-1.5 h-5 leading-5">横坐标轴交叉</h3>
        <div className="flex h-7 items-center pl-3">
          <Radio label="自动" hotkey="O" checked={cross === 'O'} onChange={() => setCross('O')} />
        </div>
        <div className="flex h-7 items-center justify-between pl-3">
          <Radio label="坐标轴值" hotkey="E" checked={cross === 'E'} onChange={() => setCross('E')} />
          <input aria-label="坐标轴值" disabled defaultValue="0" className="h-[23px] w-[90px] border border-[#c8c8c8] bg-[#eeeeee] pl-1 text-xs text-[#b4b4b4]" />
        </div>
        <div className="flex h-7 items-center pl-3">
          <Radio label="最大坐标轴值" hotkey="M" checked={cross === 'M'} onChange={() => setCross('M')} />
        </div>
        <div className="flex h-7 items-center justify-between">
          <label htmlFor="unit">显示单位</label>
          <span className="relative flex items-center">
            <select id="unit" className="h-[22px] w-[90px] appearance-none rounded border border-[#c8c8c8] bg-white pl-[5px] text-xs">
              <option>无</option>
            </select>
            <span className="pointer-events-none absolute right-1.5"><Caret className="text-[#555]" /></span>
          </span>
        </div>
        <div className="flex h-7 items-center pl-3">
          <Check label="在图表上显示刻度单位标签" hotkey="S" disabled />
        </div>
        <div className="flex h-7 items-center">
          <Check label="对数刻度" hotkey="L" />
          <label htmlFor="base" className="mr-1.5 ml-auto">基准</label>
          <input id="base" disabled defaultValue="10" className="h-[23px] w-[95px] border border-[#c8c8c8] bg-[#eeeeee] pl-1 text-xs text-[#b4b4b4]" />
        </div>
        <div className="flex h-7 items-center">
          <Check label="逆序刻度值" hotkey="V" />
        </div>
      </div>
      <div className="mt-1.5">
        {['刻度线标记', '标签', '数字'].map((s) => (
          <button key={s} className="flex h-[54px] w-full items-center gap-[7px] pl-[13px]">
            <svg width="5" height="10" viewBox="0 0 5 10" aria-hidden="true"><path d="M0 0l5 5-5 5z" fill="#7d7d7d" /></svg>
            {s}
          </button>
        ))}
      </div>
      <div className="pointer-events-none absolute top-[42px] left-[217px] h-[83px] w-[79px] border-[3px] border-[#fb0000] shadow-[2px_3px_5px_rgba(0,0,0,0.5),inset_2px_3px_5px_rgba(0,0,0,0.35)]" />
      <div className="pointer-events-none absolute top-[173px] left-[122px] h-[171px] w-[164px] border-[3px] border-[#fb0000] shadow-[2px_3px_5px_rgba(0,0,0,0.5),inset_2px_3px_5px_rgba(0,0,0,0.35)]" />
    </aside>
  );
};

/* ---------- right icon strip ---------- */

const stripItems: { label: string; active?: boolean; icon: React.ReactNode }[] = [
  {
    label: '动画',
    icon: (
      <>
        <path d="M9 .8l1.900 3.600 4.300.7-3 2.900.8 4.200L9 10.300l-3.500 1.500.5-3.800-3-2.900 4.100-.7z" />
        <path d="M3 8L.5 10M4 11l-3 3M7 12.500l-2.500 3M10.500 12.500l-2 3M3.500 3.500L1 5.500" stroke="#666" />
      </>
    ),
  },
  {
    label: '切换',
    icon: <path d="M4.500 5.500H2a1 1 0 0 1-1-1v-3a1 1 0 0 1 1-1h8a1 1 0 0 1 1 1v3M6.500 5h8a1 1 0 0 1 1 1v8a1 1 0 0 1-1 1h-5a1 1 0 0 1-1-1v-3M1 8v1.500a2 2 0 0 0 2 2h4M5 9l2.500 2.500L5 14" />,
  },
  {
    label: '形状',
    icon: <><circle cx="5.500" cy="10" r="5" /><path d="M6 3V2a1 1 0 0 1 1-1h7.500a1 1 0 0 1 1 1v8a1 1 0 0 1-1 1H12" /></>,
  },
  {
    label: '艺术字',
    icon: <path d="M2 11.500L7 1.500h2l5 10h-2.500l-1-2h-5l-1 2zM6.300 7.500L8 4l1.700 3.500zM1 13.500h14M3 15.500h10" />,
  },
  {
    label: '对象属性',
    active: true,
    icon: (
      <>
        <path d="M0 3h11.500M4.500 8.500H16M0 8.500h1M0 14h4.500M8.500 14H16" />
        <circle cx="13.500" cy="3" r="2" /><circle cx="2.800" cy="8.500" r="1.800" /><circle cx="6.500" cy="14" r="1.800" />
      </>
    ),
  },
  {
    label: '模板',
    icon: <><path d="M3 14.500H1.500a1 1 0 0 1-1-1v-12a1 1 0 0 1 1-1h9v3M.5 3.500h10M3.500 3.500v11" /><rect x="4.500" y="5.500" width="11" height="9.500" rx="1" /><path d="M5 14l4-4 3 3 3-2" /><circle cx="12" cy="8.500" r=".6" /></>,
  },
  {
    label: '素材库',
    icon: <g stroke="#777"><path d="M.5 1.500h15v4H.5zM1.500 5.500v9h13v-9M5.500 8.500V10h5V8.500" /></g>,
  },
  {
    label: '图片',
    icon: <g strokeWidth="1.200"><rect x=".8" y="1" width="14.500" height="14" rx="1" /><path d="M1 12l4-3 3 2.500 3-2.500 4 3" /><circle cx="6" cy="5" r="1" /></g>,
  },
  {
    label: '音频',
    icon: <g stroke="#777"><path d="M.5 5.500h3L8.500 1v13.500L3.500 10.500h-3zM11 5c1.500 2 1.500 4 0 6M13.500 2.500c2.800 3.500 2.800 7.500 0 11" /></g>,
  },
  {
    label: '推荐',
    icon: <g stroke="#c2c2c2"><path d="M8 .5l6.500 3.800v7.400L8 15.500l-6.500-3.800V4.300z" /><path d="M8 12C5 11 5 8 5 7l2 1.500L8.500 4 9 8l2-1c0 3-1 4.500-3 5z" fill="#c2c2c2" stroke="none" /></g>,
  },
  {
    label: '历史版本',
    icon: <path d="M2.500 9a6.500 6.500 0 1 1 2 4M0 7l2.500 2.500L5 7M9 4v5l2.500 2.500" strokeWidth="1.200" />,
  },
  {
    label: '帮助中心',
    icon: <><circle cx="8" cy="8" r="7.400" /><path d="M5.500 6.200a2.500 2.500 0 1 1 4 2C8.300 9 8 9.300 8 10.500M8 11.500V13" strokeWidth="1.200" /></>,
  },
];

const IconStrip = () => (
  <aside className="flex w-9 shrink-0 flex-col items-center bg-[#d8d8d8] pt-[9px]">
    <Icon w={16} h={6} stroke="#999"><path d="M0 1.500h16M0 4.500h16" /></Icon>
    <div className="mt-[15px] flex flex-col gap-3">
      {stripItems.map((s) => (
        <button
          key={s.label}
          aria-label={s.label}
          className={`flex h-6 w-6 items-center justify-center rounded ${s.active ? 'bg-[#adadad]' : ''}`}
        >
          <Icon stroke="#444" sw={1}>{s.icon}</Icon>
        </button>
      ))}
    </div>
    <span className="mt-3 h-px w-[30px] bg-[#c0c0c0]" />
    <button aria-label="更多" className="mt-[22px]">
      <Icon w={14} h={4} stroke="#777"><circle cx="2" cy="2" r="1.200" /><circle cx="7" cy="2" r="1.200" /><circle cx="12" cy="2" r="1.200" /></Icon>
    </button>
  </aside>
);

/* ---------- status bar ---------- */

const StatusBar = () => {
  const [zoom, setZoom] = useState(46);
  return (
    <footer className="flex h-[35px] items-center border-t border-[#cfcfcf] bg-[#e8e8e8] pr-4 pl-2.5 text-xs text-[#666]">
      <span className="text-[13px]">幻灯片 1 / 1</span>
      <span className="ml-2.5 h-6 w-px bg-[#d4d4d4]" />
      <span className="ml-2.5 text-[13px]">Office 主题</span>
      <span className="ml-2 h-6 w-px bg-[#d4d4d4]" />
      <div className="ml-auto flex items-center">
        <button aria-label="备注" className="mr-1.5 flex items-center gap-1">
          <Icon w={16} h={14} stroke="#444"><path d="M0 1.500h15M0 5h15M0 8.500h15M0 12h9" /><path d="M10.500 11h5L13 14z" fill="#444" stroke="none" /></Icon>
          <Caret />
        </button>
        <div className="flex gap-0.5">
          <button aria-label="普通视图" className="flex h-6 w-6 items-center justify-center rounded bg-[#bdbdbd]">
            <Icon stroke="#333"><path d="M.5 1.500h15v13H.5zM4 1.500v13M4 11.500h11.500" /></Icon>
          </button>
          <button aria-label="幻灯片浏览" className="flex h-6 w-6 items-center justify-center">
            <Icon stroke="#444"><path d="M.5 1.500h6v5h-6zM9.500 1.500h6v5h-6zM.5 9.500h6v5h-6zM9.500 9.500h6v5h-6z" /></Icon>
          </button>
          <button aria-label="阅读视图" className="flex h-6 w-6 items-center justify-center">
            <Icon stroke="#444"><path d="M.5 1.500h6L8 2.500l1.500-1h6v13H9.500l-1.500 1-1.500-1h-6zM8 2.500v13" /></Icon>
          </button>
          <button aria-label="演讲实录" className="flex h-6 w-6 items-center justify-center">
            <Icon stroke="#444"><path d="M2.500 4.500a3 3 0 0 1 3-3.500H9a2 2 0 0 1 2 2M4 3.500h7a1 1 0 0 1 1 1M2.500 5.500h7a2 2 0 0 1 2 2v5a2 2 0 0 1-2 2h-7a2 2 0 0 1-2-2v-5a2 2 0 0 1 2-2zM11.500 8.500l4-3v8l-4-2.500" /><circle cx="8.500" cy="8" r="1.300" /></Icon>
          </button>
        </div>
        <button aria-label="放映" className="ml-4 flex h-6 w-8 items-center justify-center rounded bg-[#e67a4b]">
          <Icon w={10} h={12} stroke="none"><path d="M1 0l9 6-9 6z" fill="#fff" /></Icon>
        </button>
        <span className="ml-1"><Caret /></span>
        <button className="ml-[18px] flex items-center gap-1.5 text-[#333]">98% <Caret /></button>
        <button aria-label="缩小" className="ml-2.5 flex"><span className="h-0.5 w-3 bg-[#555]" /></button>
        <input
          type="range"
          aria-label="缩放"
          value={zoom}
          onChange={(e) => setZoom(Number(e.target.value))}
          className="mr-1.5 ml-[11px] h-3 w-[143px] appearance-none bg-transparent [&::-webkit-slider-runnable-track]:h-px [&::-webkit-slider-runnable-track]:bg-[#777] [&::-webkit-slider-thumb]:-mt-1.5 [&::-webkit-slider-thumb]:h-3 [&::-webkit-slider-thumb]:w-3 [&::-webkit-slider-thumb]:appearance-none [&::-webkit-slider-thumb]:rounded-full [&::-webkit-slider-thumb]:border [&::-webkit-slider-thumb]:border-[#555] [&::-webkit-slider-thumb]:bg-[#e8e8e8]"
        />
        <button aria-label="放大"><Icon w={12} stroke="#444" sw={2}><path d="M6 0v12M0 6h12" /></Icon></button>
        <button aria-label="适应窗口" className="ml-3.5">
          <Icon w={12} stroke="#444" sw={1.200}><path d="M1 4V1h3M8 1h3v3M11 8v3H8M4 11H1V8M4.500 6h3M6 4.500v3" /></Icon>
        </button>
      </div>
    </footer>
  );
};

/* ---------- floating widgets ---------- */

const SpeedBall = () => (
  <div className="absolute right-[17px] bottom-[128px] flex items-center">
    <div className="z-10 -mr-4 flex h-[60px] w-[60px] items-center justify-center rounded-full bg-[#4d515f] shadow-[0_0_5px_rgba(0,0,0,0.4)]">
      <svg width="60" height="60" viewBox="0 0 60 60" fill="none" strokeWidth="1.500" className="absolute" aria-hidden="true">
        <defs>
          <linearGradient id="ring-r" x1="0" y1="0" x2="0" y2="1">
            <stop offset="0" stopColor="#3fd6d0" />
            <stop offset="0.6" stopColor="#7fe08a" />
            <stop offset="1" stopColor="#e6dc4a" />
          </linearGradient>
          <linearGradient id="ring-l" x1="0" y1="0" x2="0" y2="1">
            <stop offset="0" stopColor="#f0556a" />
            <stop offset="0.5" stopColor="#f09a55" />
            <stop offset="1" stopColor="#e6dc4a" />
          </linearGradient>
        </defs>
        <path d="M30 4.500a25.500 25.500 0 0 1 0 51" stroke="url(#ring-r)" />
        <path d="M30 55.500A25.500 25.500 0 0 1 12 12" stroke="url(#ring-l)" />
      </svg>
      <span className="relative text-2xl font-light text-white">87</span>
      <span className="relative mt-2 text-[10px] text-white">%</span>
    </div>
    <div className="flex h-[42px] w-[75px] flex-col justify-center rounded-r-full bg-[#2c2f38] pr-2 pl-[19px] text-[11px] text-white shadow-[0_0_4px_rgba(0,0,0,0.35)]">
      <div className="flex h-5 items-center justify-between">
        <Icon w={7} h={7} stroke="#4db1f0" sw={1.500}><path d="M3.500 7V1M.5 4l3-3 3 3" /></Icon>
        <span className="font-semibold">0<span className="text-[10px] font-normal text-[#9a9da6]">K/s</span></span>
      </div>
      <div className="flex h-5 items-center justify-between border-t border-[#3a3d47]">
        <Icon w={7} h={7} stroke="#35b54a" sw={1.500}><path d="M3.500 0v6M.5 3l3 3 3-3" /></Icon>
        <span className="font-semibold">0.3<span className="text-[10px] font-normal text-[#9a9da6]">K/s</span></span>
      </div>
    </div>
  </div>
);

const ImeBar = () => (
  <div className="absolute right-[38px] bottom-[101px] z-20 flex items-center">
    <svg width="32" height="32" viewBox="0 0 32 32" className="z-10 -mr-4" aria-hidden="true">
      <path d="M3 5L23 1q2.500-.4 3 2l4.500 20q.5 2.500-2 3L8 30q-3 .5-3.500-2L1 8q-.5-2.500 2-3z" fill="#f25a1d" />
      <path d="M25 8.500C20 6 8.500 7 8 11.500c-.6 4.500 16 2.500 15.800 7C23.500 23 12 24.500 6 21.500" fill="none" stroke="#fff" strokeWidth="4.500" />
    </svg>
    <div className="flex h-[26px] items-center gap-2.5 border border-[#bcd3ee] bg-white pr-[5px] pl-[21px] text-[#0a6fd8]">
      <button className="text-[14px] leading-4 font-bold">中</button>
      <button aria-label="中文标点" className="flex w-4 justify-center">
        <Icon w={14} h={14} stroke="#0a6fd8" sw={1.800}><circle cx="3.500" cy="4" r="1.800" /><path d="M10.500 7.500h1.200c.5 2 0 3.500-1.700 4.500" /></Icon>
      </button>
      <button aria-label="语音" className="flex w-3 justify-center">
        <Icon w={12} h={16} stroke="#0a6fd8" sw={1.500}>
          <rect x="3.500" y=".5" width="5" height="9" rx="2.500" fill="#0a6fd8" />
          <path d="M1 7c0 6.500 10 6.500 10 0M6 12v2M4 15h4" />
        </Icon>
      </button>
      <button aria-label="软键盘">
        <Icon w={16} h={12} stroke="#0a6fd8" sw={1.400}>
          <rect x=".7" y=".7" width="14.600" height="10.600" rx="1" />
          <path d="M1 4h14M1 7h14M4.500 1v6.500M8 1v6.500M11.500 1v6.500M4 9.500h8" strokeWidth="1" />
        </Icon>
      </button>
      <button aria-label="工具箱">
        <Icon w={14} stroke="#0a6fd8" sw={1.800}>
          <rect x="1" y="1" width="4.500" height="4.500" fill="#0a6fd8" /><circle cx="11" cy="3.300" r="2.300" />
          <rect x="1" y="8.500" width="4.500" height="4.500" fill="#0a6fd8" /><rect x="8.700" y="8.500" width="4.500" height="4.500" fill="#0a6fd8" />
        </Icon>
      </button>
    </div>
  </div>
);

const SiteMark = () => (
  <div className="pointer-events-none absolute right-[9px] bottom-2 flex items-center gap-0.5 opacity-90">
    <svg width="42" height="42" viewBox="0 0 42 42" aria-hidden="true">
      <defs>
        <linearGradient id="mark-b" x1="0" y1="1" x2="1" y2="0">
          <stop offset="0" stopColor="#3f6fc0" />
          <stop offset="1" stopColor="#58c4ea" />
        </linearGradient>
        <linearGradient id="mark-g" x1="0" y1="1" x2="1" y2="0">
          <stop offset="0" stopColor="#d3e04a" />
          <stop offset="0.6" stopColor="#4fb86a" />
        </linearGradient>
      </defs>
      <path d="M42 1C22 0 2 12 0 27c0 3 1 5 3 7C3 20 16 6 42 1z" fill="url(#mark-b)" />
      <path d="M26 8C12 10 3 22 7 30c3 5 12 4 15-3-5 4-11 3-11-2 0-6 6-13 15-17z" fill="#5a8fd6" />
      <path d="M23 17c10-3 18 0 17 6-2 9-20 18-36 17 16-2 27-9 28-15 .5-4-3-6-9-8z" fill="url(#mark-g)" />
      <path d="M14 24c2-4 6-6 10-6-4 2-6 6-10 6z" fill="#6aa4dc" />
    </svg>
    <div className="flex flex-col">
      <span className="text-[21px] leading-6 font-bold text-[#5b97d3]">极光下载站</span>
      <span className="font-['Liberation_Sans',sans-serif] text-base leading-5 font-bold text-[#4fbf70]">www.xz7.com</span>
    </div>
  </div>
);

export default function App() {
  return (
    <div className="relative flex min-h-screen flex-col overflow-hidden bg-[#e8e8e8] font-['Open_Sans','Noto_Sans_CJK_SC',sans-serif]">
      <TitleBar />
      <MenuBar />
      <Ribbon />
      <div className="flex flex-1">
        <SlidePanel />
        <Canvas />
        <PropertyPanel />
        <IconStrip />
      </div>
      <StatusBar />
      <SpeedBall />
      <ImeBar />
      <SiteMark />
    </div>
  );
}
